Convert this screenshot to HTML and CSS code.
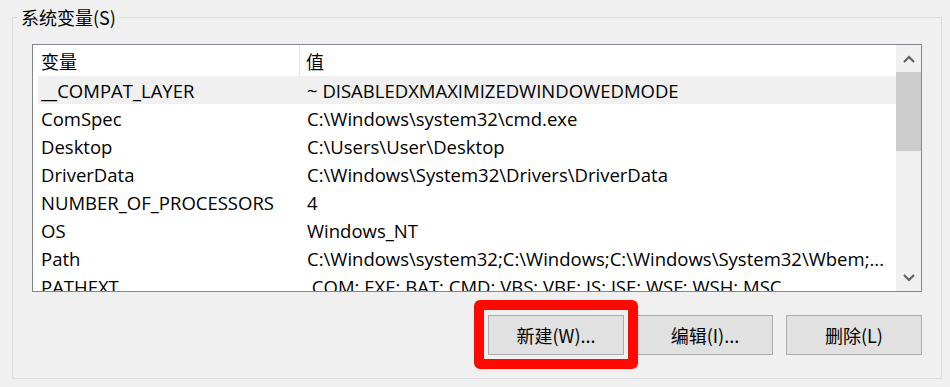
FILE: index.html
```html
<!DOCTYPE html>
<html lang="zh-CN">
<head>
<meta charset="utf-8">
<link rel="stylesheet" href="styles.css">
</head>
<body>
<div class="page">
  <div class="group">
    <div class="group-title">系统变量(S)</div>
    <div class="listview">
      <div class="list-body">
        <div class="row header">
          <div class="cell c1">变量</div>
          <div class="cell c2">值</div>
        </div>
        <div class="row hot"><div class="cell c1">__COMPAT_LAYER</div><div class="cell c2">~ DISABLEDXMAXIMIZEDWINDOWEDMODE</div></div>
        <div class="row"><div class="cell c1">ComSpec</div><div class="cell c2">C:\Windows\system32\cmd.exe</div></div>
        <div class="row"><div class="cell c1">Desktop</div><div class="cell c2">C:\Users\User\Desktop</div></div>
        <div class="row"><div class="cell c1">DriverData</div><div class="cell c2">C:\Windows\System32\Drivers\DriverData</div></div>
        <div class="row"><div class="cell c1">NUMBER_OF_PROCESSORS</div><div class="cell c2">4</div></div>
        <div class="row"><div class="cell c1">OS</div><div class="cell c2">Windows_NT</div></div>
        <div class="row"><div class="cell c1">Path</div><div class="cell c2">C:\Windows\system32;C:\Windows;C:\Windows\System32\Wbem;...</div></div>
        <div class="row"><div class="cell c1">PATHEXT</div><div class="cell c2">.COM;.EXE;.BAT;.CMD;.VBS;.VBE;.JS;.JSE;.WSF;.WSH;.MSC</div></div>
      </div>
      <div class="scrollbar">
        <div class="sb-btn">
          <svg width="12" height="8" viewBox="0 0 12 8"><path d="M1 7 L6 2 L11 7" fill="none" stroke="#606060" stroke-width="2.2"/></svg>
        </div>
        <div class="sb-thumb"></div>
        <div class="sb-track"></div>
        <div class="sb-btn">
          <svg width="12" height="8" viewBox="0 0 12 8"><path d="M1 1 L6 6 L11 1" fill="none" stroke="#606060" stroke-width="2.2"/></svg>
        </div>
      </div>
    </div>
    <div class="buttons">
      <button class="btn">新建(W)...</button>
      <button class="btn">编辑(I)...</button>
      <button class="btn">删除(L)</button>
    </div>
  </div>
  <div class="highlight"></div>
</div>
</body>
</html>
```

FILE: styles.css
```css
html, body {
  margin: 0;
  padding: 0;
}
body {
  background: #f0f0f0;
  width: 950px;
  height: 387px;
  overflow: hidden;
  font-family: "Microsoft YaHei UI", "Segoe UI", "Open Sans", "Noto Sans CJK SC", sans-serif;
  font-size: 18.5px;
  color: #000;
}
.page {
  position: relative;
  width: 950px;
  height: 387px;
  padding-top: 17px;
  box-sizing: border-box;
}
.group {
  margin-left: 12px;
  width: 930px;
  height: 362px;
  border: 1px solid #dcdcdc;
  box-sizing: border-box;
}
.group-title {
  width: fit-content;
  margin-top: -10px;
  margin-left: 5px;
  padding: 0 3px;
  background: #f0f0f0;
  line-height: 18px;
  height: 18px;
  font-family: "Noto Sans CJK SC", sans-serif;
  font-size: 18px;
}
.listview {
  margin: 18px 0 0 19px;
  width: 890px;
  height: 248px;
  border: 1px solid #828790;
  box-sizing: border-box;
  background: #fff;
  display: flex;
  overflow: hidden;
}
.list-body {
  flex: 1;
  padding-left: 5px;
  overflow: hidden;
}
.row {
  display: flex;
  height: 28px;
  align-items: center;
  white-space: nowrap;
}
.row.header {
  height: 31px;
}
.row.hot {
  background: #f0f0f0;
}
.cell {
  overflow: hidden;
  height: 100%;
  display: flex;
  align-items: center;
  box-sizing: border-box;
}
.c1 {
  width: 262px;
  padding-left: 3px;
}
.c2 {
  flex: 1;
  padding-left: 7px;
}
.header .c1 {
  border-right: 1px solid #e5e5e5;
  font-family: "Noto Sans CJK SC", sans-serif;
  font-size: 18px;
}
.header .c2 {
  padding-left: 6px;
  font-family: "Noto Sans CJK SC", sans-serif;
  font-size: 18px;
}
.scrollbar {
  width: 25px;
  background: #f0f0f0;
  display: flex;
  flex-direction: column;
}
.sb-btn {
  height: 27px;
  display: flex;
  align-items: center;
  justify-content: center;
}
.sb-thumb {
  height: 79px;
  background: #cdcdcd;
}
.sb-track {
  flex: 1;
}
.buttons {
  display: flex;
  justify-content: flex-end;
  gap: 13px;
  margin: 23px 19px 0 0;
}
.btn {
  width: 136px;
  height: 40px;
  background: #e1e1e1;
  border: 1px solid #adadad;
  font-family: "Noto Sans CJK SC", sans-serif;
  font-size: 18px;
  color: #000;
  padding: 0;
}
.highlight {
  position: absolute;
  left: 474px;
  top: 300px;
  width: 164px;
  height: 69px;
  border: 10px solid #ff0a00;
  border-radius: 6px;
  box-sizing: border-box;
}
```
